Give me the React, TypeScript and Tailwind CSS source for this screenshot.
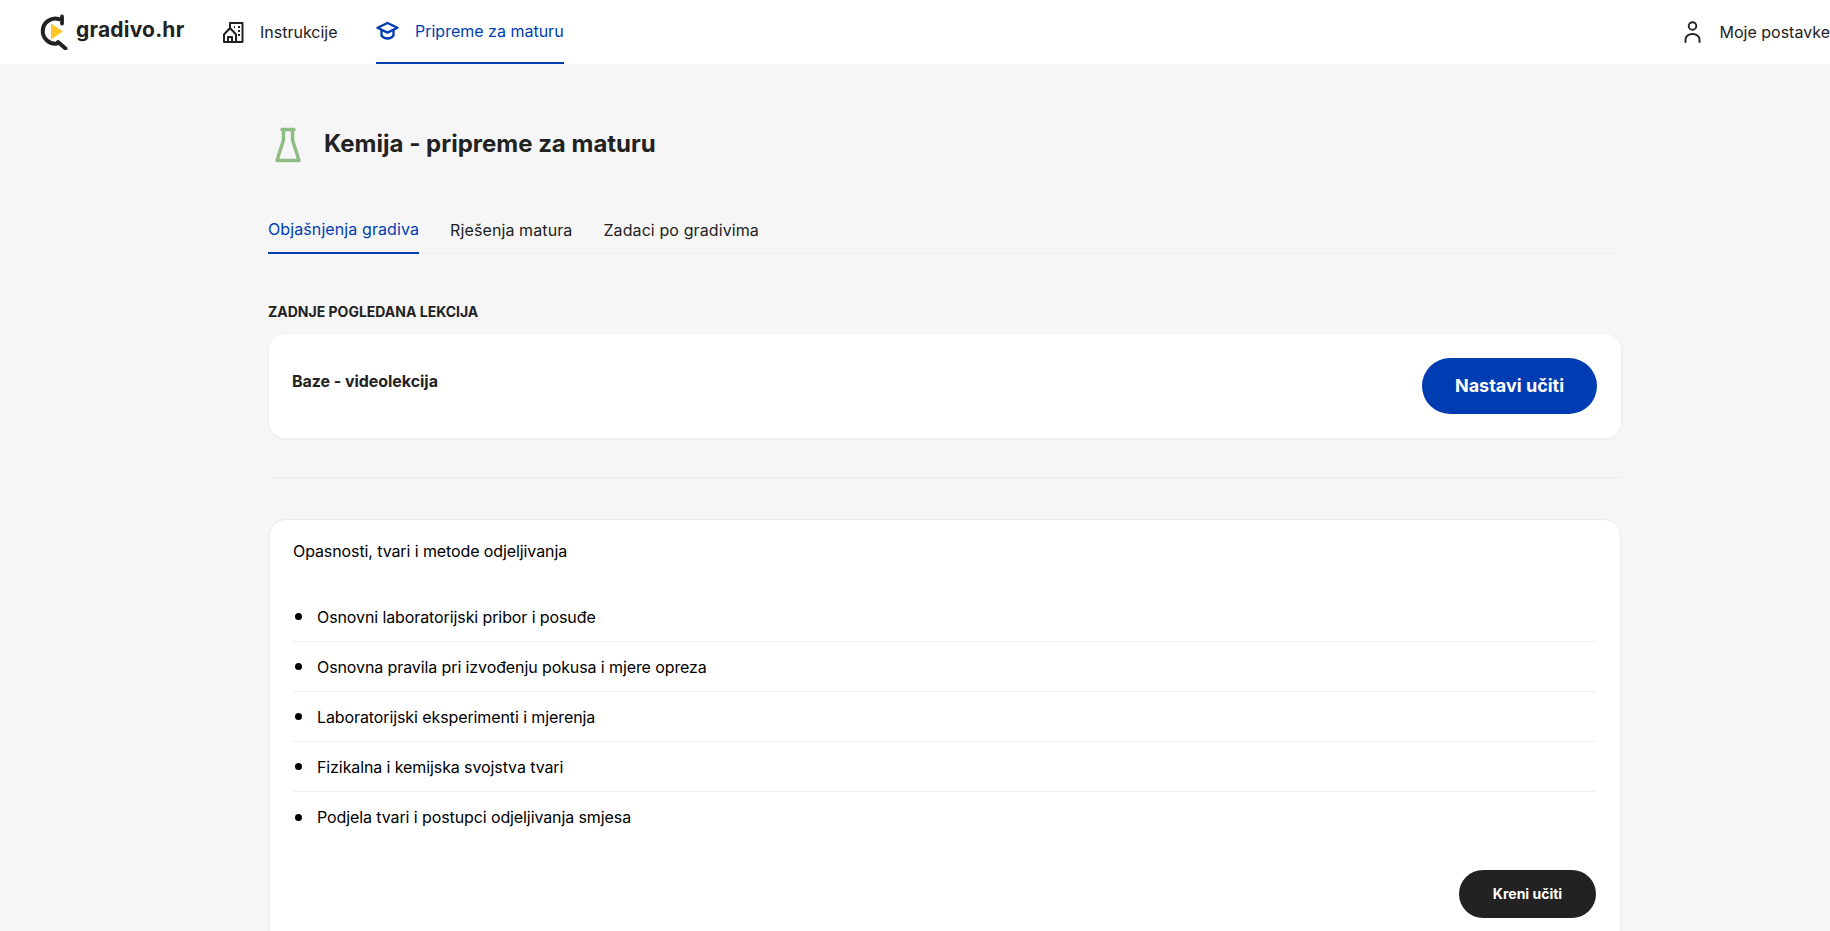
const lessons = [
  "Osnovni laboratorijski pribor i posuđe",
  "Osnovna pravila pri izvođenju pokusa i mjere opreza",
  "Laboratorijski eksperimenti i mjerenja",
  "Fizikalna i kemijska svojstva tvari",
  "Podjela tvari i postupci odjeljivanja smjesa",
];

function Logo() {
  return (
    <svg className="w-[30px] h-[36px]" viewBox="0 0 30 36" fill="none">
      <path d="M19 5.200A12.500 12.500 0 1 0 17 29.500" stroke="#222" strokeWidth="4" strokeLinecap="round" />
      <path d="M22 2.500v7" stroke="#222" strokeWidth="3.800" strokeLinecap="round" />
      <path d="M18 28l7.500 6.500" stroke="#222" strokeWidth="4" strokeLinecap="round" />
      <path d="M11 9.500l12 8-12 8z" fill="#ffc627" />
    </svg>
  );
}

function BuildingIcon() {
  return (
    <svg className="w-[22px] h-[22px]" viewBox="0 0 22 22" fill="none" stroke="#222" strokeWidth="2" strokeLinejoin="round">
      <path d="M8 7V2h12.500v19H2v-7.500L8 7l6 6.500V21" />
      <path d="M6 21v-5h4v5" />
      <path d="M16 6h2M16 10h2M16 14h2M12 6h1" strokeWidth="1.800" />
    </svg>
  );
}

function CapIcon() {
  return (
    <svg className="w-[23px] h-[20px]" viewBox="0 0 23 20" fill="none" stroke="#003db3" strokeWidth="2.300" strokeLinejoin="round" strokeLinecap="round">
      <path d="M1.500 6.800L11.500 2l10 4.800-10 4.800z" />
      <path d="M5.500 9.500v5c1.500 2 3.700 3 6 3s4.500-1 6-3v-5" />
    </svg>
  );
}

function UserIcon() {
  return (
    <svg className="w-[17px] h-[22px]" viewBox="0 0 17 22" fill="none" stroke="#222" strokeWidth="1.900" strokeLinecap="round">
      <circle cx="8.500" cy="5" r="3.800" />
      <path d="M1.500 21v-2.500a7 5.500 0 0 1 14 0V21" />
    </svg>
  );
}

function FlaskIcon() {
  return (
    <svg className="w-[28px] h-[36px]" viewBox="0 0 28 36" fill="none" stroke="#8fbc85" strokeWidth="3.400" strokeLinejoin="round" strokeLinecap="round">
      <path d="M8 2.500h12" />
      <path d="M9.500 2.500v10.500L3 33.500h22L18.500 13V2.500" />
    </svg>
  );
}

export default function App() {
  return (
    <div className="h-screen overflow-hidden bg-[#f6f6f6] text-[#222] font-['Inter',sans-serif]">
      <header className="h-16 bg-white flex items-stretch">
        <div className="ml-10 flex items-center gap-[6px] w-[182px]">
          <Logo />
          <span className="text-[21px] font-bold leading-none -mt-[5px] tracking-[0.2px]">gradivo.hr</span>
        </div>
        <a className="flex items-center gap-4 w-[154px]">
          <BuildingIcon />
          <span className="text-base">Instrukcije</span>
        </a>
        <a className="flex items-center gap-4 border-b-2 border-[#003db3] text-[#003db3] w-[188px]">
          <CapIcon />
          <span className="text-base whitespace-nowrap">Pripreme za maturu</span>
        </a>
        <a className="ml-auto flex items-center gap-[19px] whitespace-nowrap">
          <UserIcon />
          <span className="text-base">Moje postavke</span>
        </a>
      </header>

      <main className="ml-[268px] w-[1353px] pt-[63px]">
        <div className="h-[35px] flex items-center">
          <div className="ml-[6px] flex">
            <FlaskIcon />
          </div>
          <h1 className="ml-[22px] mb-[2px] text-2xl font-bold">Kemija - pripreme za maturu</h1>
        </div>

        <div className="mt-[44px] h-12 flex gap-[31px] border-b border-[#efefef] text-base tracking-[0.1px]">
          <a className="h-12 flex items-center border-b-2 border-[#003db3] text-[#003db3]">Objašnjenja gradiva</a>
          <a className="h-12 flex items-center">Rješenja matura</a>
          <a className="h-12 flex items-center">Zadaci po gradivima</a>
        </div>

        <h2 className="mt-12 text-sm leading-5 font-bold">ZADNJE POGLEDANA LEKCIJA</h2>

        <section className="mt-3 h-[104px] bg-white rounded-2xl shadow-[0_1px_4px_rgba(0,0,0,0.05)] ml-px pl-[23px] pr-6 pt-6 flex justify-between">
          <p className="mt-[11px] text-base leading-6 font-bold tracking-[-0.05px]">Baze - videolekcija</p>
          <button className="w-[175px] h-14 rounded-full bg-[#003db3] text-white text-lg font-bold">Nastavi učiti</button>
        </section>

        <div className="mt-[39px] ml-px h-px bg-[#ececec]" />

        <section className="mt-[41px] ml-px bg-white rounded-2xl border border-[#ececec] pl-[23px] pr-6 pt-[19px] pb-8 text-black">
          <h3 className="text-base leading-6 tracking-[-0.1px]">Opasnosti, tvari i metode odjeljivanja</h3>
          <ul className="mt-[29px]">
            {lessons.map((lesson, i) => (
              <li key={lesson} className={`h-[50px] flex items-center gap-[15px] ${i < lessons.length - 1 ? "border-b border-[#f0f0f0]" : ""}`}>
                <span className="ml-[2px] w-[7px] h-[7px] rounded-full bg-black" />
                <span className="text-base tracking-[-0.1px]">{lesson}</span>
              </li>
            ))}
          </ul>
          <div className="mt-7 flex justify-end">
            <button className="w-[137px] h-12 rounded-full bg-[#222] text-white text-sm font-bold">Kreni učiti</button>
          </div>
        </section>
      </main>
    </div>
  );
}
